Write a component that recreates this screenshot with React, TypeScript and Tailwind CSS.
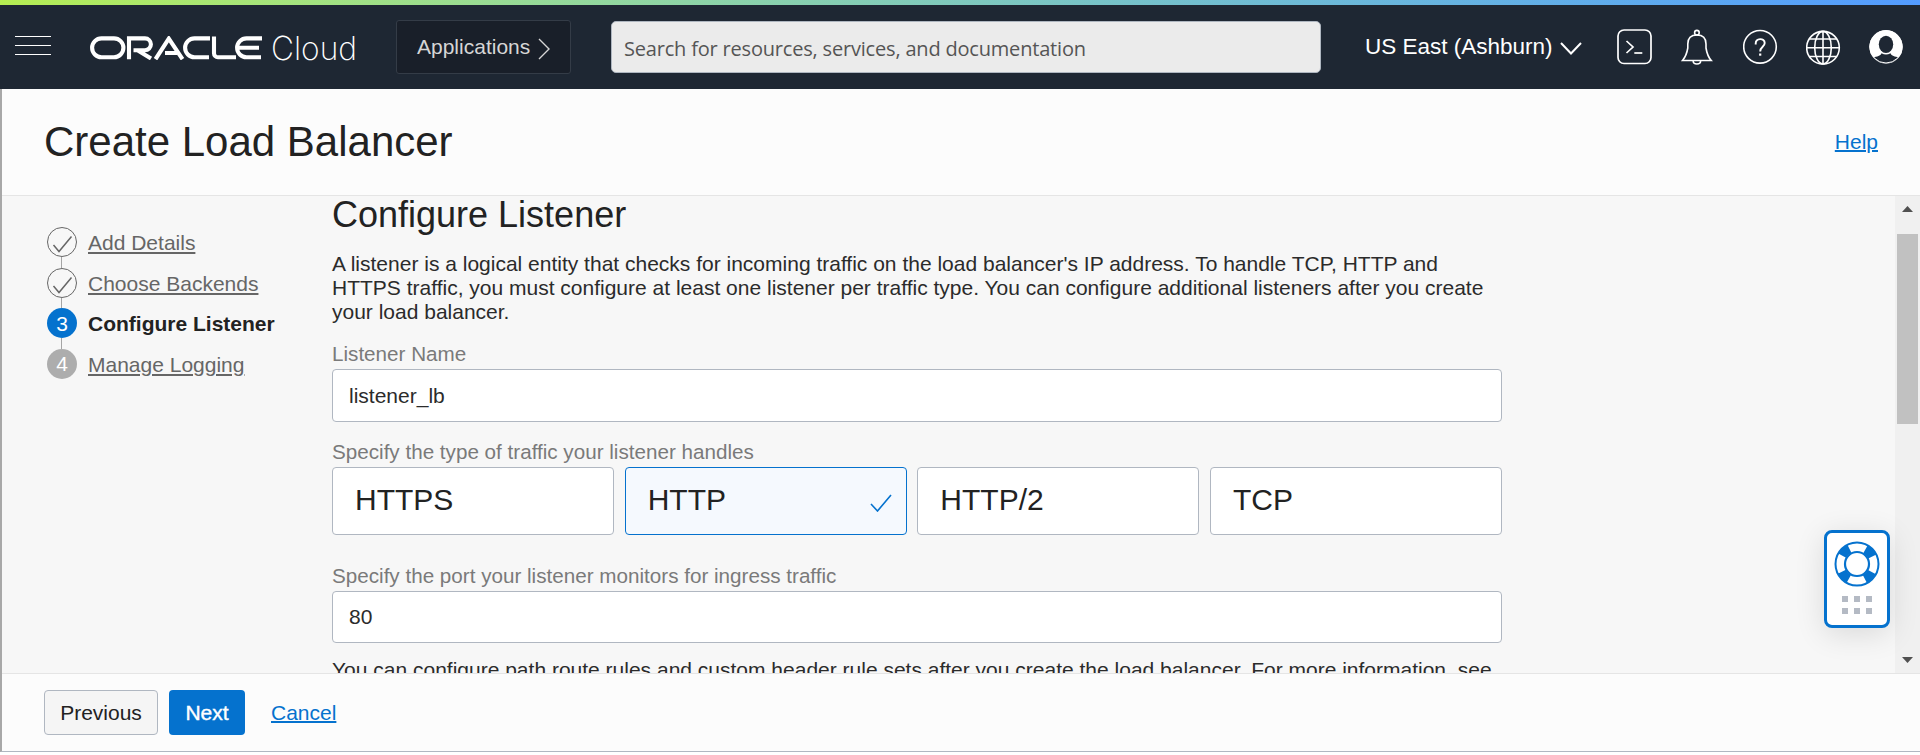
import React from "react";

const steps = [
  { label: "Add Details", state: "done" },
  { label: "Choose Backends", state: "done" },
  { label: "Configure Listener", state: "current" },
  { label: "Manage Logging", state: "todo" },
];

const traffic = [
  { label: "HTTPS", width: "w-[282px]", selected: false },
  { label: "HTTP", width: "w-[282px]", selected: true },
  { label: "HTTP/2", width: "w-[282px]", selected: false },
  { label: "TCP", width: "w-[292px]", selected: false },
];

function OracleLogo() {
  return (
    <svg className="h-6 w-[173px]" viewBox="0 0 173 24" fill="none" stroke="#fff" strokeWidth="4.1">
      <path d="M11.5 2.4H24A9.4 9.4 0 0 1 24 21.2H11.5A9.4 9.4 0 0 1 11.5 2.4Z" />
      <path d="M39 23.2V2.4H55A5.9 5.9 0 0 1 55 14.2H43.5M47.5 14.2L61 22.5" />
      <path d="M65.5 23.2L78.8 2.6L92.5 23.2M75 17H87" />
      <path d="M120 2.4H104.5A9.4 9.4 0 0 0 104.5 21.2H119" />
      <path d="M124 0.5V17.3A3.9 3.9 0 0 0 128 21.2H146" />
      <path d="M172 2.4H156.5A9.4 9.4 0 0 0 156.5 21.2H171M148.5 11.8H169" />
    </svg>
  );
}

function TopBar() {
  return (
    <header className="shrink-0">
      <div className="h-[5px] bg-linear-to-r from-[#b5ed51] to-[#539bff]" />
      <div className="flex h-[84px] items-start bg-[#1e2733] pl-[15px] text-white">
        <div className="mt-[31px] flex w-9 flex-col gap-2">
          <div className="h-px bg-white" />
          <div className="h-px bg-white" />
          <div className="h-px bg-white" />
        </div>
        <div className="ml-[39px] mt-[31px] flex">
          <OracleLogo />
          <svg className="ml-2 -mt-1 h-8 w-[86px] overflow-visible" viewBox="0 0 86 32">
            <text x="0" y="27.5" fill="#fff" className="font-['Inter',sans-serif] font-extralight" fontSize="33" textLength="86" lengthAdjust="spacingAndGlyphs">
              Cloud
            </text>
          </svg>
        </div>
        <div className="ml-[39px] mt-[15px] flex h-[54px] w-[175px] items-center rounded-[3px] border border-[#343c47] bg-[#191f29] pl-5 text-[21px] text-[#d6d6d6]">
          <span>Applications</span>
          <svg className="ml-[8px] mt-[3px] h-6 w-3" viewBox="0 0 12 24" fill="none" stroke="#d6d6d6" strokeWidth="1.4">
            <path d="M1 2L11 12L1 22" />
          </svg>
        </div>
        <div className="ml-10 mt-4 flex h-[52px] w-[710px] items-center rounded-[5px] border border-[#aeb6c0] bg-[#ebebeb] pl-[12px] text-[#555]">
          <span className="mt-[4px] whitespace-nowrap font-['Open_Sans',sans-serif] text-[20px] tracking-[-0.19px]">
            Search for resources, services, and documentation
          </span>
        </div>
        <div className="ml-11 mt-[29px] flex w-[218px] items-start">
          <span className="whitespace-nowrap text-[22.5px] leading-[26px]">US East (Ashburn)</span>
          <svg className="ml-[7px] mt-[7px] h-[15px] w-[22px] shrink-0" viewBox="0 0 22 15" fill="none" stroke="#fff" strokeWidth="2">
            <path d="M1 2L11 12.5L21 2" />
          </svg>
        </div>
        <div className="ml-[34px] mt-[24px] flex">
          <svg className="h-9 w-9" viewBox="0 0 36 36" fill="none" stroke="#fff" strokeWidth="1.7">
            <rect x="1" y="1" width="33" height="33.5" rx="6" />
            <path d="M9.5 12L16 18L9.5 24" />
            <path d="M17.3 24H25.3" />
          </svg>
          <svg className="ml-[28px] h-9 w-8" viewBox="0 0 32 36" fill="none" stroke="#fff" strokeWidth="1.6">
            <path d="M1.500 31.5C4.5 28 6 24 6.8 19V15C6.8 9.5 10 6 15.9 6S25 9.500 25 15V19C25.800 24 27 28 30.300 31.5Z" />
            <circle cx="15.9" cy="3.700" r="2.300" />
            <path d="M12.200 32C12.200 36 19.600 36 19.600 32" />
          </svg>
          <svg className="ml-[30px] h-9 w-9" viewBox="0 0 36 36" fill="none" stroke="#fff" strokeWidth="1.6">
            <circle cx="17" cy="17.800" r="16.300" />
            <path d="M12.700 15.500V14.500C12.700 8.700 21.700 8.700 21.700 14C21.700 18 17.200 17.500 17.200 22.500" strokeWidth="1.900" />
            <path d="M17.200 24.500V26.700" strokeWidth="2.200" />
          </svg>
          <svg className="ml-[27px] h-9 w-9" viewBox="0 0 36 36" fill="none" stroke="#fff" strokeWidth="1.6">
            <circle cx="17" cy="18.700" r="16.300" />
            <ellipse cx="17" cy="18.700" rx="8.300" ry="16.300" />
            <path d="M17 2.500V35M0.700 18.700H33.300M3.500 10H30.500M3.500 27.500H30.500" />
          </svg>
          <svg className="ml-[27px] h-9 w-9" viewBox="0 0 36 36">
            <circle cx="17" cy="17.800" r="16.700" fill="#fff" />
            <ellipse cx="17" cy="15.300" rx="7.200" ry="8.600" fill="#1e2733" />
            <path fill="#1e2733" d="M12.500 24.300Q17 26.800 21.500 24.300C22.500 27 26 27.800 29.500 28.300A16 16 0 0 1 4.500 28.300C8 27.800 11.500 27 12.500 24.300Z" />
            <circle cx="17" cy="17.800" r="16.200" fill="none" stroke="#fff" />
          </svg>
        </div>
      </div>
    </header>
  );
}

function Stepper() {
  return (
    <nav className="flex w-[288px] shrink-0 flex-col pl-[3px] pt-[31px]">
      {steps.map((step, i) => (
        <div key={step.label}>
          {i > 0 && <div className="ml-[14px] h-[10.7px] w-px bg-[#a5a5a5]" />}
          <div className="flex h-[30px] items-center">
            {step.state === "done" && (
              <svg className="h-[30px] w-[30px]" viewBox="0 0 30 30" fill="none" stroke="#666">
                <circle cx="15" cy="15" r="14.5" />
                <path d="M6.500 18L12 24.5L24.5 9.5" strokeWidth="1.500" />
              </svg>
            )}
            {step.state === "current" && (
              <div className="flex h-[30px] w-[30px] items-center justify-center rounded-full bg-[#0572ce] text-[21px] text-white">{i + 1}</div>
            )}
            {step.state === "todo" && (
              <div className="flex h-[30px] w-[30px] items-center justify-center rounded-full bg-[#adadad] text-[21px] text-white">{i + 1}</div>
            )}
            <span
              className={
                step.state === "current"
                  ? "ml-[11px] mt-[2px] text-[21px] font-bold leading-6 text-[#222]"
                  : "ml-[11px] mt-[2px] text-[21px] leading-6 text-[#666] underline"
              }
            >
              {step.label}
            </span>
          </div>
        </div>
      ))}
    </nav>
  );
}

function ListenerForm() {
  return (
    <main className="w-[1170px] shrink-0 text-[21px] leading-6 text-[#2b2b2b]">
      <h2 className="text-[36px] leading-[38px] text-[#222]">Configure Listener</h2>
      <p className="mt-[18px] whitespace-nowrap">
        A listener is a logical entity that checks for incoming traffic on the load balancer's IP address. To handle TCP, HTTP and
        <br />
        HTTPS traffic, you must configure at least one listener per traffic type. You can configure additional listeners after you create
        <br />
        your load balancer.
      </p>
      <div className="mt-[18px] h-[27px] text-[20.65px] text-[#7a7a7a]">Listener Name</div>
      <div className="flex h-[53px] items-center rounded border border-[#b0b7c1] bg-white pl-4">listener_lb</div>
      <div className="mt-[18px] h-[27px] text-[20.65px] text-[#7a7a7a]">Specify the type of traffic your listener handles</div>
      <div className="flex justify-between">
        {traffic.map((t) => (
          <div
            key={t.label}
            className={`${t.width} flex h-[68px] items-center justify-between rounded border pl-[22px] pr-[14px] text-[30px] text-[#222] ${
              t.selected ? "border-[#0572ce] bg-[#f5f9fe]" : "border-[#b0b7c1] bg-white"
            }`}
          >
            <span className="-mt-[2px]">{t.label}</span>
            {t.selected && (
              <svg className="mt-1 h-[18px] w-[22px]" viewBox="0 0 22 18" fill="none" stroke="#0572ce" strokeWidth="1.6">
                <path d="M1 10L7.5 17L21 1" />
              </svg>
            )}
          </div>
        ))}
      </div>
      <div className="mt-[29px] h-[27px] text-[20.65px] text-[#7a7a7a]">Specify the port your listener monitors for ingress traffic</div>
      <div className="flex h-[52px] items-center rounded border border-[#b0b7c1] bg-white pl-4">80</div>
      <p className="mt-[15px] whitespace-nowrap">
        You can configure path route rules and custom header rule sets after you create the load balancer. For more information, see
      </p>
    </main>
  );
}

function ScrollBar() {
  return (
    <div className="flex h-full w-[25px] flex-col items-center bg-[#f0f0f0]">
      <svg className="mt-[10px] h-[6px] w-[11px] shrink-0" viewBox="0 0 11 6" fill="#505050">
        <path d="M5.5 0L11 6H0Z" />
      </svg>
      <div className="mt-[22px] h-[190px] w-[21px] bg-[#c1c1c1]" />
      <svg className="mb-[10px] mt-auto h-[6px] w-[11px] shrink-0" viewBox="0 0 11 6" fill="#505050">
        <path d="M0 0H11L5.5 6Z" />
      </svg>
    </div>
  );
}

function SupportWidget() {
  return (
    <div className="absolute right-[30px] top-[530px] flex h-[98px] w-[66px] flex-col items-center rounded-lg border-3 border-[#0572ce] bg-white shadow-[0_6px_30px_rgba(0,0,0,0.12)]">
      <svg className="mt-[8px] h-[46px] w-[46px]" viewBox="0 0 46 46" fill="none" stroke="#0572ce">
        <circle cx="23" cy="23" r="17" strokeWidth="9" strokeDasharray="10 16.704" strokeDashoffset="-8.352" />
        <circle cx="23" cy="23" r="21.5" strokeWidth="2" />
        <circle cx="23" cy="23" r="12" strokeWidth="2.200" />
      </svg>
      <div className="mt-[9px] grid grid-cols-3 gap-[6px]">
        {[0, 1, 2, 3, 4, 5].map((n) => (
          <div key={n} className="h-[6px] w-[6px] bg-[#b4bac4]" />
        ))}
      </div>
    </div>
  );
}

export default function App() {
  return (
    <div className="relative flex h-[755px] w-[1920px] flex-col overflow-hidden bg-white font-['Liberation_Sans',sans-serif]">
      <TopBar />
      <div className="flex h-[663px] flex-col border-b border-l-2 border-b-[#b0b7c1] border-l-[#a8a8a8] bg-[#fcfcfc]">
        <div className="flex h-[107px] shrink-0 items-center justify-between border-b border-[#e5e5e5] px-[42px]">
          <h1 className="text-[42px] leading-[48px] text-[#222]">Create Load Balancer</h1>
          <a className="text-[21px] leading-6 text-[#0572ce] underline decoration-2">Help</a>
        </div>
        <div className="flex h-[477px] shrink-0 overflow-hidden bg-[#f7f7f7] pl-[42px]">
          <Stepper />
          <ListenerForm />
          <div className="ml-auto">
            <ScrollBar />
          </div>
        </div>
        <div className="flex flex-1 items-start border-t border-[#e5e5e5] pl-[42px] pt-4 text-[21px]">
          <div className="flex h-[45px] w-[114px] items-center justify-center rounded border border-[#b0b7c1] bg-[#f5f5f5] text-[#222]">Previous</div>
          <div className="ml-[11px] flex h-[45px] w-[76px] items-center justify-center rounded bg-[#0572ce] text-white [-webkit-text-stroke:0.4px_white]">Next</div>
          <a className="ml-[26px] mt-[11px] leading-6 text-[#0572ce] underline decoration-2">Cancel</a>
        </div>
      </div>
      <SupportWidget />
    </div>
  );
}
